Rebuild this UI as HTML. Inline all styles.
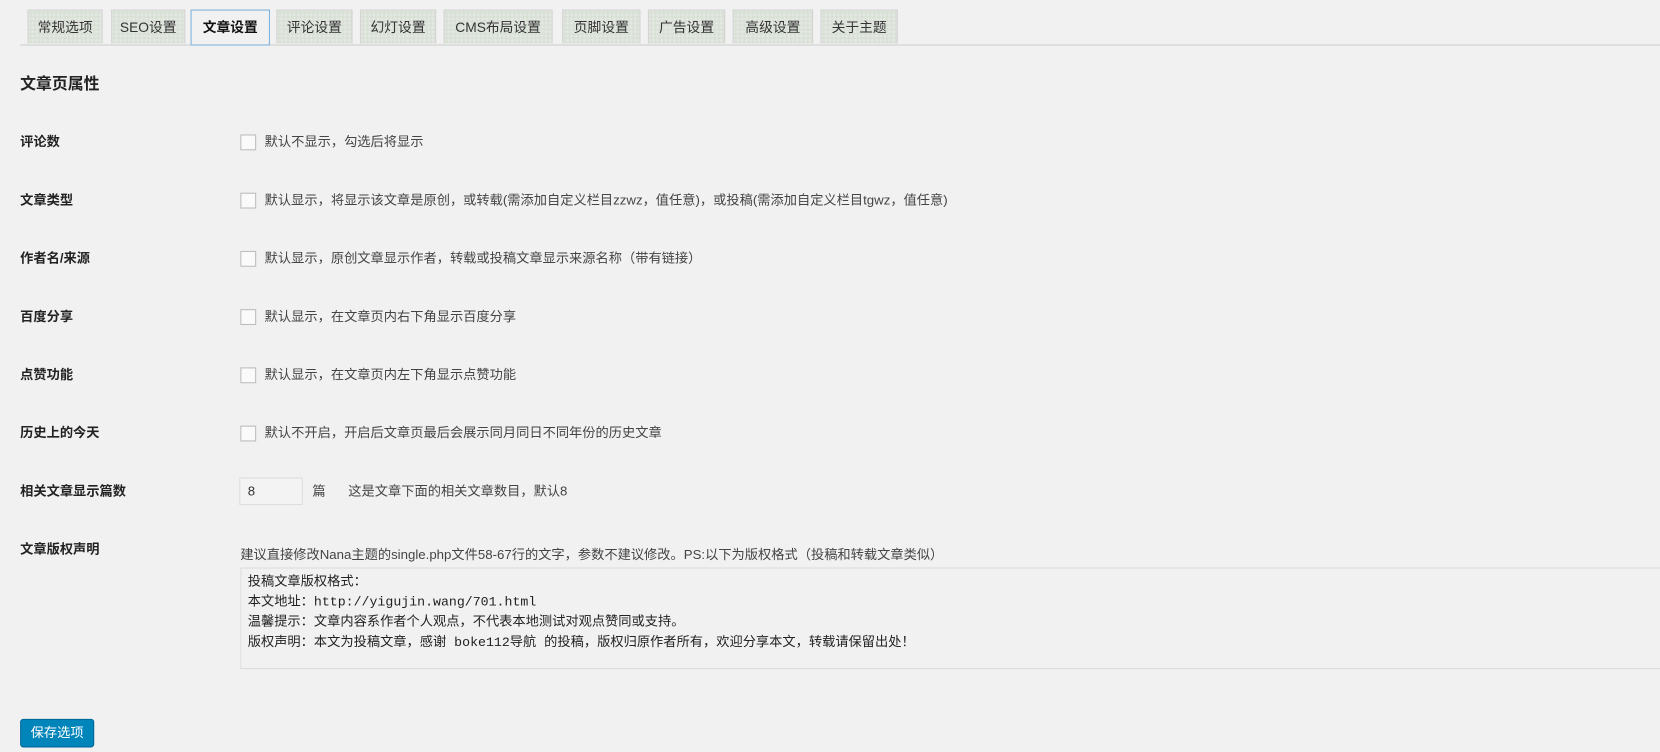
<!DOCTYPE html>
<html><head><meta charset="utf-8"><style>
body{margin:0;background:#f1f1f1;width:1660px;height:752px;overflow:hidden;position:relative}
#w{position:absolute;left:0;top:0;width:1568px;height:710px;transform:scale(1.0587);transform-origin:0 0;font-family:"Liberation Sans","Noto Sans CJK SC",sans-serif;color:#444;font-size:12.5px}
.tabs{position:absolute;left:19px;top:9px;right:0;height:33px;border-bottom:1px solid #ccc}
.tab{position:absolute;top:0;height:32px;line-height:32px;text-align:center;background:#dde3db;background-image:radial-gradient(#cfe0cc 30%,transparent 31%),radial-gradient(#ececec 30%,transparent 31%);background-size:4px 4px;background-position:0 0,2px 2px;border:1px solid #d4d4d4;border-bottom:none;color:#333;font-size:13px;box-sizing:border-box}
.tab.act{background:#f1f1f1;border:1px solid #7eb2dc;height:34px;color:#111;font-weight:bold}
.ab{position:absolute}
h2{position:absolute;left:19px;top:68px;margin:0;font-size:15px;color:#222;font-weight:bold}
.lab{position:absolute;left:19px;font-weight:bold;color:#222;font-size:12.5px;margin-top:-3px}
.cb{position:absolute;left:227px;width:13px;height:13px;border:1px solid #bbb;background:#fafafa;margin-top:1px}
.txt{position:absolute;left:250px;color:#444;margin-top:-3px}
</style></head><body><div id="w">
<div class="tabs"></div>
<div class="tab" style="left:26px;top:9px;width:71px">常规选项</div>
<div class="tab" style="left:105px;top:9px;width:70px">SEO设置</div>
<div class="tab act" style="left:180px;top:9px;width:75px">文章设置</div>
<div class="tab" style="left:261px;top:9px;width:72px">评论设置</div>
<div class="tab" style="left:340px;top:9px;width:72px">幻灯设置</div>
<div class="tab" style="left:419px;top:9px;width:103px">CMS布局设置</div>
<div class="tab" style="left:531px;top:9px;width:74px">页脚设置</div>
<div class="tab" style="left:612px;top:9px;width:73px">广告设置</div>
<div class="tab" style="left:692px;top:9px;width:76px">高级设置</div>
<div class="tab" style="left:775px;top:9px;width:73px">关于主题</div>

<h2>文章页属性</h2>
<div class="lab" style="top:126px">评论数</div><div class="cb" style="top:126px"></div><div class="txt" style="top:126px">默认不显示，勾选后将显示</div>
<div class="lab" style="top:181px">文章类型</div><div class="cb" style="top:181px"></div><div class="txt" style="top:181px">默认显示，将显示该文章是原创，或转载(需添加自定义栏目zzwz，值任意)，或投稿(需添加自定义栏目tgwz，值任意)</div>
<div class="lab" style="top:236px">作者名/来源</div><div class="cb" style="top:236px"></div><div class="txt" style="top:236px">默认显示，原创文章显示作者，转载或投稿文章显示来源名称（带有链接）</div>
<div class="lab" style="top:291px">百度分享</div><div class="cb" style="top:291px"></div><div class="txt" style="top:291px">默认显示，在文章页内右下角显示百度分享</div>
<div class="lab" style="top:346px">点赞功能</div><div class="cb" style="top:346px"></div><div class="txt" style="top:346px">默认显示，在文章页内左下角显示点赞功能</div>
<div class="lab" style="top:401px">历史上的今天</div><div class="cb" style="top:401px"></div><div class="txt" style="top:401px">默认不开启，开启后文章页最后会展示同月同日不同年份的历史文章</div>
<div class="lab" style="top:456px">相关文章显示篇数</div>
<div class="ab" style="left:226px;top:451px;width:60px;height:26px;border:1px solid #ddd;background:#f3f3f3;box-sizing:border-box;padding-left:7px;line-height:24px;color:#333">8</div>
<div class="ab" style="left:295px;top:453px">篇</div>
<div class="ab" style="left:329px;top:453px">这是文章下面的相关文章数目，默认8</div>
<div class="lab" style="top:511px">文章版权声明</div>
<div class="ab" style="left:227px;top:513px">建议直接修改Nana主题的single.php文件58-67行的文字，参数不建议修改。PS:以下为版权格式（投稿和转载文章类似）</div>
<div class="ab" style="left:227px;top:536px;width:1440px;height:96px;border:1px solid #ddd;box-sizing:border-box;padding:4px 6px;font-family:'Liberation Mono','Noto Sans CJK SC',monospace;font-size:12.5px;line-height:19px;color:#222;white-space:pre">投稿文章版权格式：
本文地址：http://yigujin.wang/701.html
温馨提示：文章内容系作者个人观点，不代表本地测试对观点赞同或支持。
版权声明：本文为投稿文章，感谢 boke112导航 的投稿，版权归原作者所有，欢迎分享本文，转载请保留出处！</div>
<div class="ab" style="left:19px;top:679px;width:70px;height:27px;background:#0085ba;border:1px solid #006799;border-radius:3px;box-sizing:border-box;color:#fff;text-align:center;line-height:25px">保存选项</div>
</div></body></html>
